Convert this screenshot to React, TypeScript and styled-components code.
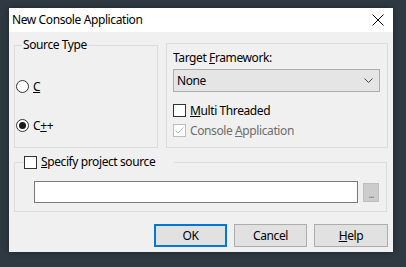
import React from "react";
import { styled, createGlobalStyle } from "styled-components";

const GlobalStyle = createGlobalStyle`
  *, *::before, *::after {
    box-sizing: border-box;
  }
  html, body {
    margin: 0;
    padding: 0;
    background: #2e3942;
    width: 406px;
    height: 267px;
    overflow: hidden;
  }
  body {
    font-family: "Noto Sans", "Open Sans", sans-serif;
    font-size: 12px;
    letter-spacing: -0.4px;
    color: #000;
  }
`;

export default function App() {
  return (
    <>
      <GlobalStyle />
      <Page>
        <Dialog>
          <TitleBar>
            <Title>New Console Application</Title>
            <CloseIcon width="12" height="12" viewBox="0 0 12 12">
              <path d="M0.5 0.5 L11.5 11.5 M11.5 0.5 L0.5 11.5" stroke="#000" strokeWidth="1" />
            </CloseIcon>
          </TitleBar>

          <Body>
            <TopRow>
              <SourceGroup>
                <Legend>Source Type</Legend>
                <RadioList>
                  <Option>
                    <Radio />
                    <span><u>C</u></span>
                  </Option>
                  <Option>
                    <Radio $checked />
                    <span>C<u>+</u>+</span>
                  </Option>
                </RadioList>
              </SourceGroup>

              <FrameworkGroup>
                <FieldLabel>Target <u>F</u>ramework:</FieldLabel>
                <Combo>
                  <span>None</span>
                  <svg width="9" height="5" viewBox="0 0 9 5">
                    <path d="M0.5 0.5 L4.5 4.5 L8.5 0.5" fill="none" stroke="#444" strokeWidth="1" />
                  </svg>
                </Combo>
                <CheckRow>
                  <CheckBox />
                  <span><u>M</u>ulti Threaded</span>
                </CheckRow>
                <CheckRow $disabled>
                  <CheckBox $disabled>
                    <svg width="11" height="11" viewBox="0 0 11 11">
                      <path d="M1.5 5.5 L4 8 L9.5 2.5" fill="none" stroke="#bcbcbc" strokeWidth="1" />
                    </svg>
                  </CheckBox>
                  <span>Console <u>A</u>pplication</span>
                </CheckRow>
              </FrameworkGroup>
            </TopRow>

            <SourceBox>
              <CheckLegend>
                <CheckBox />
                <span><u>S</u>pecify project source</span>
              </CheckLegend>
              <PathRow>
                <PathInput />
                <BrowseButton>...</BrowseButton>
              </PathRow>
            </SourceBox>

            <ButtonRow>
              <Button $default>OK</Button>
              <Button>Cancel</Button>
              <Button $wide><u>H</u>elp</Button>
            </ButtonRow>
          </Body>
        </Dialog>
      </Page>
    </>
  );
}

const Page = styled.div`
  padding: 8px 0 0 9px;
`;

const Dialog = styled.div`
  width: 384px;
  height: 244px;
  background: #f0f0f0;
  display: flex;
  flex-direction: column;
  box-shadow: 0 0 6px rgba(0, 0, 0, 0.35);
`;

const TitleBar = styled.div`
  height: 24px;
  background: #fff;
  display: flex;
  align-items: center;
  justify-content: space-between;
  padding: 0 9px 0 3px;
`;

const Title = styled.span`
  font-size: 12px;
  line-height: 16px;
`;

const CloseIcon = styled.svg`
  display: block;
`;

const Body = styled.div`
  flex: 1;
  display: flex;
  flex-direction: column;
  padding: 4px 5px 5px 5px;
`;

const TopRow = styled.div`
  display: flex;
  gap: 8px;
  height: 112px;
`;

const Group = styled.fieldset`
  margin: 0;
  border: 1px solid #dcdcdc;
  min-width: 0;
`;

const SourceGroup = styled(Group)`
  width: 144px;
  margin-top: 1px;
  padding: 0 0 0 1px;
`;

const Legend = styled.legend`
  padding: 0 1px;
  margin-left: 6px;
  line-height: 16px;
`;

const RadioList = styled.div`
  display: flex;
  flex-direction: column;
  gap: 23px;
  padding-top: 25px;
`;

const Option = styled.label`
  display: flex;
  align-items: center;
  gap: 4px;
  height: 16px;
`;

const Radio = styled.span<{ $checked?: boolean }>`
  width: 13px;
  height: 13px;
  border: 1px solid #333;
  border-radius: 50%;
  background: #fff;
  display: flex;
  align-items: center;
  justify-content: center;
  &::after {
    content: "";
    width: 7px;
    height: 7px;
    border-radius: 50%;
    background: ${(p) => (p.$checked ? "#1a1a1a" : "transparent")};
  }
`;

const FrameworkGroup = styled(Group)`
  flex: 1;
  margin-top: 7px;
  padding: 6px 7px 0 6px;
  display: flex;
  flex-direction: column;
`;

const FieldLabel = styled.div`
  line-height: 16px;
  margin-bottom: 3px;
`;

const Combo = styled.div`
  height: 23px;
  background: #e5e5e5;
  border: 1px solid #adadad;
  display: flex;
  align-items: center;
  justify-content: space-between;
  padding: 0 6px 0 3px;
  margin-bottom: 10px;
  svg {
    display: block;
  }
`;

const CheckRow = styled.label<{ $disabled?: boolean }>`
  display: flex;
  align-items: center;
  gap: 4px;
  height: 16px;
  margin-bottom: 4px;
  color: ${(p) => (p.$disabled ? "#6d6d6d" : "#000")};
`;

const CheckBox = styled.span<{ $disabled?: boolean }>`
  width: 13px;
  height: 13px;
  border: 1px solid ${(p) => (p.$disabled ? "#bcbcbc" : "#333")};
  background: #fff;
  display: flex;
  align-items: center;
  justify-content: center;
  flex-shrink: 0;
  svg {
    display: block;
  }
`;

const SourceBox = styled(Group)`
  margin: 6px 1px 0 0;
  padding: 11px 7px 8px 9px;
`;

const CheckLegend = styled.legend`
  display: flex;
  align-items: center;
  gap: 4px;
  line-height: 16px;
  padding: 0 19px 0 0;
  margin-left: 0;
`;

const PathRow = styled.div`
  display: flex;
  align-items: center;
  gap: 5px;
  padding-left: 10px;
`;

const PathInput = styled.div`
  width: 324px;
  height: 22px;
  background: #fff;
  border: 1px solid #7a7a7a;
`;

const BrowseButton = styled.div`
  width: 16px;
  height: 19px;
  background: #cccccc;
  border: 1px solid #bfbfbf;
  color: #777;
  font-size: 10px;
  line-height: 20px;
  text-align: center;
  letter-spacing: -1px;
`;

const ButtonRow = styled.div`
  margin-top: auto;
  display: flex;
  justify-content: flex-end;
  gap: 7px;
`;

const Button = styled.button<{ $default?: boolean; $wide?: boolean }>`
  width: ${(p) => (p.$wide ? "74px" : "73px")};
  height: 23px;
  padding: 0;
  background: #e1e1e1;
  border: ${(p) => (p.$default ? "2px solid #0078d7" : "1px solid #adadad")};
  font-family: "Noto Sans", "Open Sans", sans-serif;
  font-size: 12px;
  letter-spacing: -0.4px;
  color: #000;
`;
